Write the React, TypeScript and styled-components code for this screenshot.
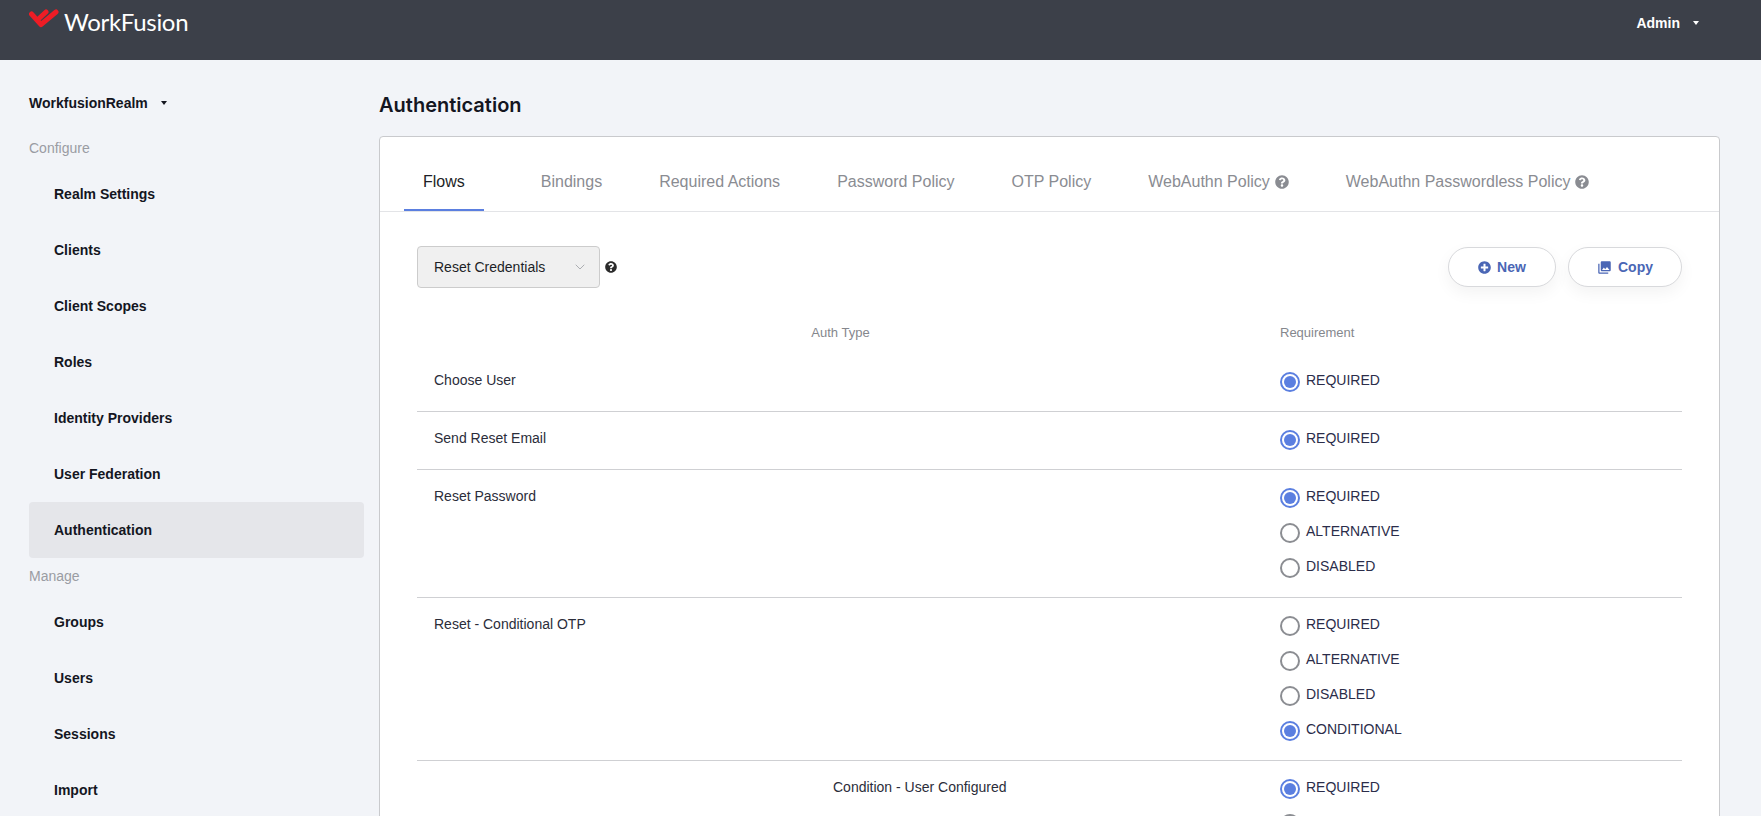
import React from "react";
import styled, { createGlobalStyle } from "styled-components";
import { FaQuestionCircle, FaPlusCircle } from "react-icons/fa";
import { MdPhotoLibrary } from "react-icons/md";
import { ChevronDown } from "lucide-react";

const GlobalStyle = createGlobalStyle`
  html, body {
    margin: 0;
    height: 100%;
    overflow: hidden;
    background: #f2f4f8;
    font-family: "Liberation Sans", Arial, sans-serif;
  }
  * { box-sizing: border-box; }
`;

const Header = styled.header`
  height: 60px;
  background: #3c4049;
  display: flex;
  justify-content: space-between;
  padding: 9px 62px 0 29px;
  color: #fff;
`;

const Logo = styled.div`
  display: flex;
  align-items: flex-start;
  gap: 5px;
`;

const LogoText = styled.span`
  font-family: Lato, sans-serif;
  font-size: 24px;
  line-height: 26px;
  font-weight: 400;
  letter-spacing: -0.3px;
`;

const UserMenu = styled.div`
  display: flex;
  align-items: center;
  gap: 13px;
  height: 28px;
  font-size: 14px;
  font-weight: 700;
`;

const Caret = styled.span<{ $dark?: boolean }>`
  width: 0;
  height: 0;
  border-left: 3.5px solid transparent;
  border-right: 3.5px solid transparent;
  border-top: 4px solid ${(p) => (p.$dark ? "#14161f" : "#fff")};
`;

const Layout = styled.div`
  display: grid;
  grid-template-columns: 335px 1341px;
  column-gap: 15px;
  padding-left: 29px;
`;

const Sidebar = styled.aside`
  display: flex;
  flex-direction: column;
`;

const RealmRow = styled.div`
  display: flex;
  align-items: center;
  gap: 13px;
  height: 22px;
  margin: 32px 0 16px;
  font-size: 14px;
  font-weight: 700;
  color: #14161f;
`;

const SectionLabel = styled.div`
  height: 20px;
  line-height: 20px;
  margin: 8px 0;
  font-size: 14px;
  color: #9a9ca3;
`;

const NavItem = styled.div<{ $active?: boolean }>`
  height: 56px;
  line-height: 56px;
  padding-left: 25px;
  font-size: 14px;
  font-weight: 700;
  color: #14161f;
  border-radius: 4px;
  background: ${(p) => (p.$active ? "#e5e6ea" : "transparent")};
`;

const Main = styled.main`
  padding-top: 32px;
`;

const Title = styled.h1`
  margin: 0 0 18px;
  font-family: Inter, sans-serif;
  font-size: 20px;
  line-height: 26px;
  font-weight: 600;
  color: #14161f;
`;

const Panel = styled.section`
  background: #fff;
  border: 1px solid #c9cacd;
  border-radius: 4px;
  height: 800px;
`;

const Tabs = styled.nav`
  display: flex;
  height: 75px;
  padding: 33px 0 0 24px;
  border-bottom: 1px solid #e3e4e7;
`;

const Tab = styled.div<{ $active?: boolean }>`
  display: flex;
  align-items: flex-start;
  gap: 5px;
  height: 41px;
  padding: 0 19px;
  margin-right: ${(p) => (p.$active ? "38px" : "19px")};
  font-size: 16px;
  line-height: 24px;
  color: ${(p) => (p.$active ? "#1d1f27" : "#8a8c92")};
  border-bottom: 2px solid ${(p) => (p.$active ? "#5b7fe0" : "transparent")};
  svg {
    margin-top: 5px;
    font-size: 14px;
  }
`;

const Content = styled.div`
  padding: 34px 37px 0;
`;

const Toolbar = styled.div`
  display: flex;
  align-items: center;
  height: 42px;
`;

const FlowSelect = styled.div`
  display: flex;
  align-items: center;
  justify-content: space-between;
  width: 183px;
  height: 42px;
  padding: 0 11px 0 16px;
  background: #f0f0f0;
  border: 1px solid #ccc;
  border-radius: 4px;
  font-size: 14px;
  color: #1d1f27;
  svg {
    color: #8a8c92;
  }
`;

const HelpIcon = styled.span`
  display: flex;
  margin-left: 5px;
  font-size: 12px;
  color: #2b2b2b;
`;

const Actions = styled.div`
  display: flex;
  gap: 12px;
  margin-left: auto;
`;

const ActionButton = styled.button`
  display: flex;
  align-items: center;
  justify-content: center;
  gap: 6px;
  height: 40px;
  width: ${(p: { $width: number }) => p.$width}px;
  background: #fff;
  border: 1px solid #d8d9dc;
  border-radius: 20px;
  box-shadow: 0 6px 16px rgba(0, 0, 0, 0.05);
  font-family: inherit;
  font-size: 14px;
  font-weight: 700;
  color: #4a66b5;
`;

const TableHead = styled.div`
  display: grid;
  grid-template-columns: 847px 1fr;
  column-gap: 16px;
  height: 25px;
  margin: 32px 0 9px;
  line-height: 25px;
  font-size: 13px;
  color: #85878d;
`;

const HeadCell = styled.div<{ $center?: boolean }>`
  text-align: ${(p) => (p.$center ? "center" : "left")};
`;

const Row = styled.div`
  display: grid;
  grid-template-columns: 847px 1fr;
  column-gap: 16px;
  padding: 16px 0 19px;
  border-bottom: 1px solid #cfd0d3;
`;

const RowName = styled.div<{ $indent?: boolean }>`
  padding-left: ${(p) => (p.$indent ? "416px" : "17px")};
  font-size: 14px;
  line-height: 20px;
  color: #2b2d3a;
`;

const RadioGroup = styled.div`
  display: flex;
  flex-direction: column;
  gap: 15px;
  padding-top: 2px;
`;

const RadioOption = styled.label`
  display: flex;
  gap: 6px;
  height: 20px;
  font-size: 14px;
  line-height: 16px;
  color: #2b2d4a;
`;

const RadioInput = styled.input.attrs({ type: "radio" })`
  appearance: none;
  flex: none;
  width: 20px;
  height: 20px;
  margin: 0;
  padding: 2px;
  border: 2px solid #8b8d92;
  border-radius: 50%;
  background: #fff;
  background-clip: content-box;
  &:checked {
    border-color: #5b7fe0;
    background: #5b7fe0;
    background-clip: content-box;
  }
`;

const configureItems = [
  "Realm Settings",
  "Clients",
  "Client Scopes",
  "Roles",
  "Identity Providers",
  "User Federation",
  "Authentication",
];
const manageItems = ["Groups", "Users", "Sessions", "Import"];

const tabs = [
  { label: "Flows", active: true },
  { label: "Bindings" },
  { label: "Required Actions" },
  { label: "Password Policy" },
  { label: "OTP Policy" },
  { label: "WebAuthn Policy", help: true },
  { label: "WebAuthn Passwordless Policy", help: true },
];

const rows = [
  { name: "Choose User", options: ["REQUIRED"], checked: "REQUIRED" },
  { name: "Send Reset Email", options: ["REQUIRED"], checked: "REQUIRED" },
  {
    name: "Reset Password",
    options: ["REQUIRED", "ALTERNATIVE", "DISABLED"],
    checked: "REQUIRED",
  },
  {
    name: "Reset - Conditional OTP",
    options: ["REQUIRED", "ALTERNATIVE", "DISABLED", "CONDITIONAL"],
    checked: "CONDITIONAL",
  },
  {
    name: "Condition - User Configured",
    options: ["REQUIRED", "DISABLED"],
    checked: "REQUIRED",
    indent: true,
  },
];

const WorkFusionMark = () => (
  <svg width="30" height="20" viewBox="0 0 30 20" fill="none">
    <path
      d="M2.5 5 L12 15.5 L27 3 M10 9.5 L17 3"
      stroke="#ee1c25"
      strokeWidth="5"
      strokeLinecap="round"
      strokeLinejoin="round"
    />
  </svg>
);

const App = () => {
  return (
    <>
      <GlobalStyle />
      <Header>
        <Logo>
          <WorkFusionMark />
          <LogoText>WorkFusion</LogoText>
        </Logo>
        <UserMenu>
          Admin
          <Caret />
        </UserMenu>
      </Header>
      <Layout>
        <Sidebar>
          <RealmRow>
            WorkfusionRealm
            <Caret $dark />
          </RealmRow>
          <SectionLabel>Configure</SectionLabel>
          {configureItems.map((item) => (
            <NavItem key={item} $active={item === "Authentication"}>
              {item}
            </NavItem>
          ))}
          <SectionLabel>Manage</SectionLabel>
          {manageItems.map((item) => (
            <NavItem key={item}>{item}</NavItem>
          ))}
        </Sidebar>
        <Main>
          <Title>Authentication</Title>
          <Panel>
            <Tabs>
              {tabs.map((tab) => (
                <Tab key={tab.label} $active={tab.active}>
                  {tab.label}
                  {tab.help && <FaQuestionCircle />}
                </Tab>
              ))}
            </Tabs>
            <Content>
              <Toolbar>
                <FlowSelect>
                  Reset Credentials
                  <ChevronDown size={16} strokeWidth={1} />
                </FlowSelect>
                <HelpIcon>
                  <FaQuestionCircle />
                </HelpIcon>
                <Actions>
                  <ActionButton $width={108}>
                    <FaPlusCircle size={13} />
                    New
                  </ActionButton>
                  <ActionButton $width={114}>
                    <MdPhotoLibrary size={15} />
                    Copy
                  </ActionButton>
                </Actions>
              </Toolbar>
              <TableHead>
                <HeadCell $center>Auth Type</HeadCell>
                <HeadCell>Requirement</HeadCell>
              </TableHead>
              {rows.map((row) => (
                <Row key={row.name}>
                  <RowName $indent={row.indent}>{row.name}</RowName>
                  <RadioGroup>
                    {row.options.map((option) => (
                      <RadioOption key={option}>
                        <RadioInput
                          name={row.name}
                          defaultChecked={option === row.checked}
                        />
                        {option}
                      </RadioOption>
                    ))}
                  </RadioGroup>
                </Row>
              ))}
            </Content>
          </Panel>
        </Main>
      </Layout>
    </>
  );
};

export default App;
